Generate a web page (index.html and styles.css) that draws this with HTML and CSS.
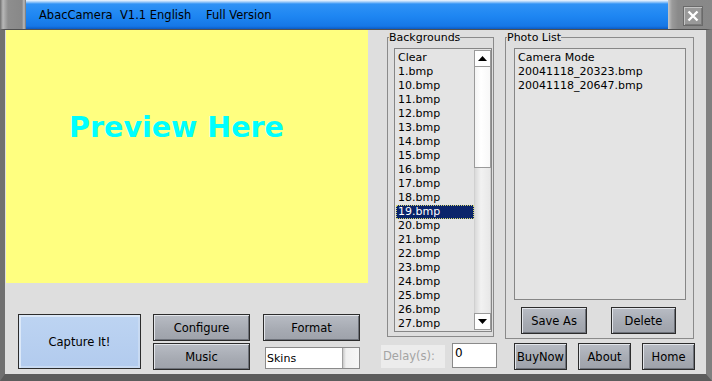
FILE: index.html
```html
<!DOCTYPE html>
<html lang="en">
<head>
  <meta charset="UTF-8" />
  <title>AbacCamera V1.1 English</title>
  <link rel="stylesheet" href="styles.css">
</head>
<body>
  <div class="window">
    <div class="titlebar">
      <div class="title-left"></div>
      <div class="title-main">AbacCamera  V1.1 English    Full Version</div>
      <div class="title-right">
        <div class="close-btn">
          <svg width="12" height="12" viewBox="0 0 12 12"><path d="M1.5 1.5 L10.5 10.5 M10.5 1.5 L1.5 10.5" stroke="#fff" stroke-width="2.4" /></svg>
        </div>
      </div>
    </div>

    <div class="client">
      <div class="col-left">
        <div class="preview">Preview Here</div>
        <div class="controls">
          <button class="btn capture">Capture It!</button>
          <div class="btn-stack">
            <button class="btn">Configure</button>
            <button class="btn">Music</button>
          </div>
          <div class="btn-stack format-stack">
            <button class="btn">Format</button>
            <div class="combo">
              <span>Skins</span>
              <div class="combo-btn"></div>
            </div>
          </div>
        </div>
      </div>

      <div class="col-mid">
        <fieldset class="group bg-group">
          <legend>Backgrounds</legend>
          <div class="listbox bg-list">
            <div class="items" id="bgItems"></div>
            <div class="scrollbar">
              <div class="sb-btn"><svg width="9" height="5" viewBox="0 0 9 5"><path d="M0 5 L4.5 0 L9 5 Z" fill="#000" /></svg></div>
              <div class="sb-thumb"></div>
              <div class="sb-track"></div>
              <div class="sb-btn"><svg width="9" height="5" viewBox="0 0 9 5"><path d="M0 0 L4.5 5 L9 0 Z" fill="#000" /></svg></div>
            </div>
          </div>
        </fieldset>
        <div class="delay-row">
          <div class="delay-label">Delay(s):</div>
          <div class="delay-input">0</div>
        </div>
      </div>

      <div class="col-right">
        <fieldset class="group photo-group">
          <legend>Photo List</legend>
          <div class="listbox photo-list">
            <div class="items">
              <div class="item">Camera Mode</div>
              <div class="item">20041118_20323.bmp</div>
              <div class="item">20041118_20647.bmp</div>
            </div>
          </div>
          <div class="photo-actions">
            <button class="btn save-btn">Save As</button>
            <button class="btn delete-btn">Delete</button>
          </div>
        </fieldset>
        <div class="link-row">
          <button class="btn small">BuyNow</button>
          <button class="btn small">About</button>
          <button class="btn small">Home</button>
        </div>
      </div>
    </div>
  </div>

  <script>
    const backgrounds = ["Clear", "1.bmp", "10.bmp"];
    for (let i = 11; i <= 27; i++) backgrounds.push(i + ".bmp");

    const bgItems = document.getElementById("bgItems");
    backgrounds.forEach(name => {
      const div = document.createElement("div");
      div.className = name === "19.bmp" ? "item selected" : "item";
      div.textContent = name;
      bgItems.appendChild(div);
    });
  </script>
</body>
</html>
```

FILE: styles.css
```css
body {
  margin: 0;
  font-family: "DejaVu Sans", Verdana, sans-serif;
  font-size: 11px;
  background: #5a5a5a;
}
.window {
  width: 712px;
  height: 381px;
  display: flex;
  flex-direction: column;
  overflow: hidden;
}

/* title bar */
.titlebar {
  height: 29px;
  display: flex;
  flex-shrink: 0;
}
.title-left {
  width: 26px;
  background: linear-gradient(90deg, #6e6e6e 0, #b8b8b8 3px, #8e8e8e 8px, #888 22px, #bcbcbc 24px, #707070 26px);
}
.title-main {
  flex: 1;
  white-space: pre;
  padding: 8px 0 0 13px;
  font-size: 11.5px;
  color: #000;
  background: linear-gradient(#f2f8ff 0, #9ccaf8 2px, #2f92f5 4px, #1e86f2 55%, #1677e6 90%, #0b5bc4 100%);
}
.title-right {
  width: 44px;
  background: linear-gradient(90deg, #c8c8c8 0, #9a9a9a 4px, #8a8a8a 10px, #888 100%);
  padding: 6px 0 0 15px;
  box-sizing: border-box;
}
.close-btn {
  width: 20px;
  height: 20px;
  box-sizing: border-box;
  border: 1px solid #6a6a6a;
  box-shadow: inset 1px 1px #c4c4c4, inset -1px -1px #7a7a7a;
  background: #999;
  display: flex;
  align-items: center;
  justify-content: center;
}

/* client area */
.client {
  flex: 1;
  display: flex;
  background: #dedede;
  border-top: 1px solid #505050;
  border-left: 5px solid #707070;
  border-right: 6px solid #808080;
  border-bottom: 7px solid #5c5c5c;
}
.col-left {
  width: 375px;
}
.preview {
  width: 362px;
  height: 253px;
  margin-left: 1px;
  background: #ffff80;
  color: #00ffff;
  font-weight: bold;
  font-size: 28.5px;
  display: flex;
  align-items: center;
  justify-content: center;
  padding: 0 21px 58px 0;
  box-sizing: border-box;
}
.controls {
  display: flex;
  margin-top: 31px;
  padding-left: 13px;
}
.btn {
  font-family: "DejaVu Sans", Verdana, sans-serif;
  font-size: 11.5px;
  color: #000;
  height: 27px;
  padding: 0;
  margin: 0;
  border: 1px solid #2c2c2c;
  background: linear-gradient(#b8bcc4, #a6aab2 60%, #9ea2aa);
  box-shadow: inset 1px 1px #e2e5ea, inset -1px -1px #6e727a;
}
.capture {
  width: 123px;
  height: 55px;
  background: linear-gradient(#bdd4f2, #b2cbee);
  box-shadow: inset 2px 2px #dbe8f8, inset -2px -2px #c8daf2;
}
.btn-stack {
  display: flex;
  flex-direction: column;
  gap: 2px;
  width: 97px;
  margin-left: 12px;
}
.format-stack {
  margin-left: 13px;
}
.combo {
  margin: 4px 0 0 2px;
  height: 22px;
  background: #fff;
  border: 1px solid #8a8a8a;
  box-sizing: border-box;
  display: flex;
  align-items: center;
  justify-content: space-between;
  padding-left: 1px;
}
.combo-btn {
  width: 16px;
  height: 20px;
  background: linear-gradient(90deg, #c8c8c8, #f0f0f0 3px, #f6f6f6);
  border-left: 1px solid #a0a0a0;
}

/* group boxes */
.group {
  margin: 1px 0 0;
  padding: 0 0 4px;
  border: 1px solid #8a8a8a;
  min-inline-size: 0;
  box-sizing: border-box;
}
.group legend {
  padding: 0;
  margin-left: 1px;
  line-height: 13px;
}
.col-mid {
  width: 120px;
}
.bg-group {
  margin-left: 7px;
  width: 107px;
}
.listbox {
  display: flex;
  background: #e4e4e4;
  border: 1px solid #868686;
  box-sizing: border-box;
  margin-top: 4px;
}
.bg-list {
  width: 98px;
  height: 284px;
  margin-left: 6px;
}
.items {
  flex: 1;
  padding: 2px 0 0 1px;
}
.item {
  line-height: 14px;
  height: 14px;
  padding-left: 2px;
  white-space: nowrap;
}
.item.selected {
  background: #0a246a;
  color: #fff;
  outline: 1px dotted #d8d870;
  outline-offset: -1px;
}
.scrollbar {
  width: 17px;
  margin: 1px 0;
  display: flex;
  flex-direction: column;
}
.sb-btn {
  height: 17px;
  box-sizing: border-box;
  background: #fff;
  border: 1px solid #9a9a9a;
  display: flex;
  align-items: center;
  justify-content: center;
}
.sb-thumb {
  height: 101px;
  box-sizing: border-box;
  border: 1px solid #9a9a9a;
  border-top: none;
  background: linear-gradient(90deg, #f4f4f4, #fff 40%, #f8f8f8);
}
.sb-track {
  flex: 1;
  background: linear-gradient(90deg, #dadada, #f2f2f2 40%, #e8e8e8);
  border-left: 1px solid #d0d0d0;
  border-right: 1px solid #d0d0d0;
}
.delay-row {
  display: flex;
  margin-top: 6px;
}
.delay-label {
  margin: 2px 0 0 1px;
  width: 64px;
  height: 23px;
  line-height: 23px;
  padding-left: 2px;
  box-sizing: border-box;
  background: #ececec;
  color: #a4a4a4;
  font-size: 11.5px;
}
.delay-input {
  margin-left: 7px;
  width: 45px;
  height: 25px;
  box-sizing: border-box;
  background: #fff;
  border: 1px solid #8a8a8a;
  padding: 2px 0 0 2px;
  font-size: 12px;
}

/* right column */
.col-right {
  flex: 1;
}
.photo-group {
  margin-left: 5px;
  width: 189px;
}
.photo-list {
  width: 172px;
  height: 252px;
  margin-left: 8px;
}
.photo-list .items {
  padding-left: 1px;
}
.photo-actions {
  display: flex;
  margin-top: 7px;
}
.save-btn {
  width: 66px;
  margin-left: 15px;
}
.delete-btn {
  width: 65px;
  margin-left: 24px;
}
.link-row {
  display: flex;
  gap: 11px;
  margin: 4px 0 0 14px;
}
.btn.small {
  width: 53px;
}
```
